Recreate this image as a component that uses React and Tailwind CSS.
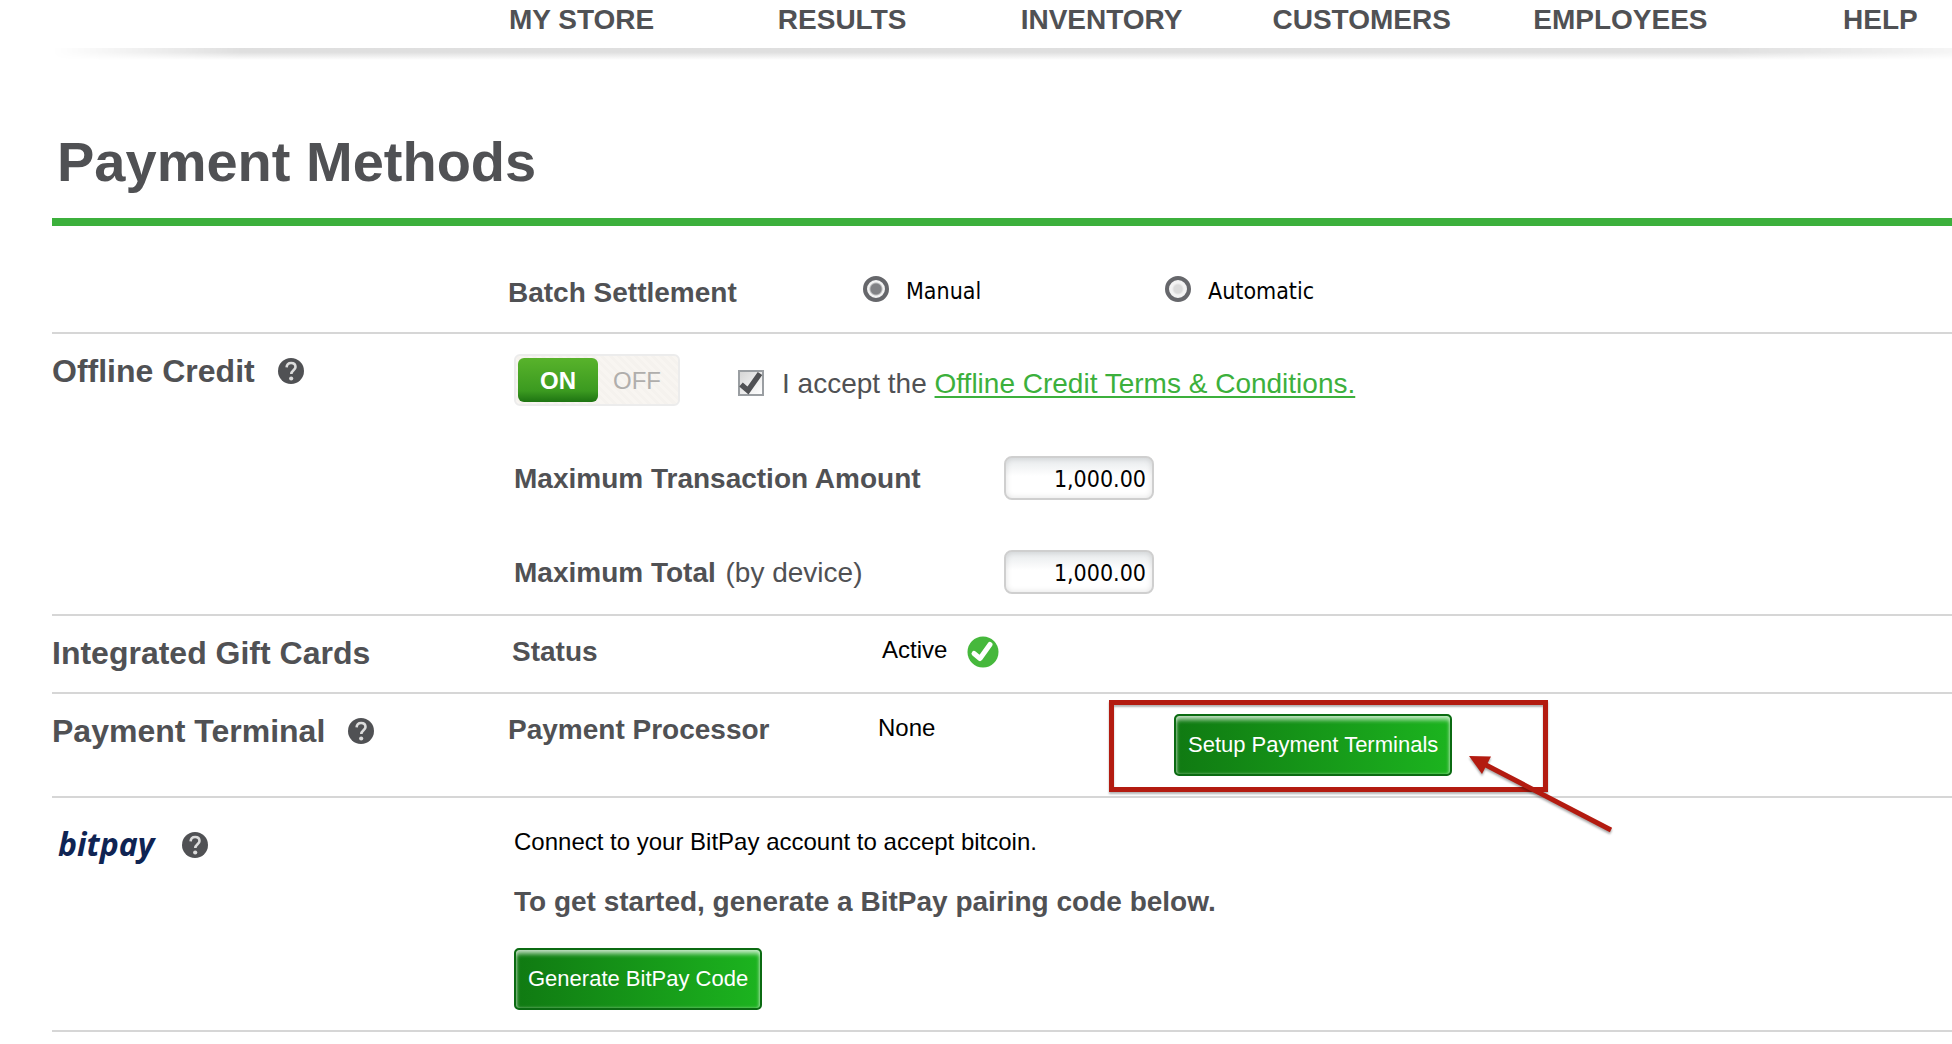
import { useState } from 'react';

const navItems = ['MY STORE', 'RESULTS', 'INVENTORY', 'CUSTOMERS', 'EMPLOYEES', 'HELP'];

function HelpButton({ label, className = '' }) {
    return (
        <button type="button" aria-label={label} className={`block w-[26px] h-[26px] shrink-0 ${className}`}>
            <svg viewBox="0 0 26 26" className="w-full h-full" aria-hidden="true">
                <circle cx="13" cy="13" r="13" fill="#505154" />
                <path d="M8.600 9.400C8.800 6.600 10.600 5 13.100 5c2.600 0 4.400 1.500 4.400 3.900 0 3.400-4.200 3.400-4.200 7.200" fill="none" stroke="#dcdcdc" strokeWidth="2.600" />
                <circle cx="13.200" cy="20.500" r="2.100" fill="#dcdcdc" />
            </svg>
        </button>
    );
}

function GreenButton({ children, className = '' }) {
    return (
        <button
            type="button"
            className={`block h-[62px] px-3 whitespace-nowrap rounded-[5px] border-2 border-[#0b6b12] bg-linear-to-r from-[#107a12] to-[#1cb41f] shadow-[inset_0_4px_4px_rgba(255,255,255,0.65),inset_0_0_3px_rgba(255,255,255,0.5)] text-[22px] leading-7 text-white ${className}`}
        >
            {children}
        </button>
    );
}

function Radio({ label, checked, onChange, className = '' }) {
    return (
        <label className={`flex items-start ${className}`}>
            <input
                type="radio"
                name="batch"
                checked={checked}
                onChange={onChange}
                className="appearance-none w-[26px] h-[26px] mt-px mr-4 rounded-full border-4 border-[#66676b] bg-[radial-gradient(circle,#dadada_0_4px,#f3f3f3_6px)] checked:bg-[radial-gradient(circle,#818285_0_5px,#f3f3f3_7px)]"
            />
            <span className="pl-px font-['DejaVu_Sans_Condensed','Noto_Sans',sans-serif] text-[23px] leading-8 text-black">{label}</span>
        </label>
    );
}

function AmountRow({ id, children, className = '' }) {
    return (
        <div className={`flex items-center h-11 ${className}`}>
            <label htmlFor={id} className="w-[490px] pt-px text-[28px] leading-8 font-bold">
                {children}
            </label>
            <input
                id={id}
                type="text"
                defaultValue="1,000.00"
                className="w-[150px] h-11 pt-[2px] px-[6px] text-right font-['DejaVu_Sans_Condensed','Noto_Sans',sans-serif] text-[23px] text-black rounded-lg border-2 border-[#cfcfcf] bg-linear-to-b from-[#e6e9eb] via-white via-45% to-white shadow-[inset_0_0_6px_rgba(0,0,0,0.12)]"
            />
        </div>
    );
}

function Section({ title, help, className = '', children }) {
    return (
        <section className="flex border-b-2 border-[#d6d6d6]">
            <div className={`w-[456px] shrink-0 flex items-start ${className}`}>
                <h2 className="text-[32px] leading-9 font-bold">{title}</h2>
                {help && <HelpButton label={help} className="mt-[5px] ml-[23px]" />}
            </div>
            {children}
        </section>
    );
}

// Red highlight around the setup button, with the arrow pointing at it
function Callout({ children }) {
    return (
        <div className="relative w-[439px] h-[92px] mt-[6px] border-5 border-[#b31b10] shadow-[0_2px_2px_rgba(0,0,0,0.3),inset_0_2px_2px_rgba(0,0,0,0.3)] pl-[60px] pt-[9px]">
            {children}
            <svg
                viewBox="0 0 150 84"
                className="absolute left-[350px] top-[48px] w-[150px] h-[84px] drop-shadow-[0_2px_1px_rgba(0,0,0,0.35)]"
                aria-hidden="true"
            >
                <path d="M20 11L147 77" stroke="#b31b10" strokeWidth="5" />
                <path d="M5 3L27 3.500L18 21Z" fill="#b31b10" />
            </svg>
        </div>
    );
}

export default function App() {
    const [batch, setBatch] = useState('manual');
    const [offline, setOffline] = useState(true);
    const [accepted, setAccepted] = useState(true);

    return (
        <div className="bg-white font-['Liberation_Sans',Arial,sans-serif] text-[#505154] overflow-x-hidden">
            <header>
                <nav className="h-12 pt-1 pl-[509px] grid grid-cols-[269fr_243fr_252fr_261fr_310fr_109fr]">
                    {navItems.map((item) => (
                        <a key={item} href="#" className="text-[28px] leading-8 font-bold whitespace-nowrap">
                            {item}
                        </a>
                    ))}
                </nav>
                <div className="h-3 ml-[52px] bg-linear-to-b from-[#dfdfdf] from-35% to-white mask-[linear-gradient(to_right,transparent,black_10%,black_88%,rgba(0,0,0,0.3))]" />
            </header>

            <main className="pl-[52px]">
                <h1 className="pl-[5px] pt-[70px] h-[158px] text-[56px] leading-16 font-bold">Payment Methods</h1>
                <div className="h-2 bg-[#3cb03c]" />

                <section className="flex h-[108px] pt-[49px] pl-[456px] border-b-2 border-[#d6d6d6]">
                    <h3 className="w-[355px] pt-[2px] text-[28px] leading-8 font-bold">Batch Settlement</h3>
                    <Radio
                        label="Manual"
                        className="w-[302px]"
                        checked={batch === 'manual'}
                        onChange={() => setBatch('manual')}
                    />
                    <Radio label="Automatic" checked={batch === 'automatic'} onChange={() => setBatch('automatic')} />
                </section>

                <Section title="Offline Credit" help="About offline credit" className="pt-[19px]">
                    <div className="pl-[6px] pt-5 pb-5">
                        <div className="flex items-start">
                            <button
                                type="button"
                                role="switch"
                                aria-checked={offline}
                                aria-label="Offline credit"
                                onClick={() => setOffline(!offline)}
                                className="flex w-[166px] h-[52px] p-[2px] rounded-md border-2 border-[#ececec] bg-[repeating-linear-gradient(45deg,#f8f5f1_0_3px,#f5f2ee_3px_6px)] text-[24px] leading-[46px]"
                            >
                                <span className="w-20 h-11 rounded-md bg-linear-to-b from-[#58b32b] via-[#3b9a20] via-75% to-[#1d7412] font-bold text-white">
                                    ON
                                </span>
                                <span className="flex-1 text-[#b0aeac]">OFF</span>
                            </button>
                            <div className="flex items-start pt-[14px] ml-[58px]">
                                <span className="relative block w-[26px] h-[26px] mt-[2px]">
                                    <input
                                        id="terms"
                                        type="checkbox"
                                        checked={accepted}
                                        onChange={() => setAccepted(!accepted)}
                                        className="appearance-none block w-[26px] h-[26px] border-2 border-[#9a9ea2] bg-linear-to-br from-[#d6d6d6] to-white"
                                    />
                                    {accepted && (
                                        <svg viewBox="0 0 26 26" className="absolute inset-0 pointer-events-none" aria-hidden="true">
                                            <path d="M3 14.500L10 20.500L22 3.500" fill="none" stroke="#505154" strokeWidth="5.500" />
                                        </svg>
                                    )}
                                </span>
                                <label htmlFor="terms" className="ml-[18px] text-[28px] leading-8 whitespace-pre">
                                    I accept the{' '}
                                </label>
                                <a href="#" className="text-[28px] leading-8 text-[#3cb03c] underline decoration-2 underline-offset-3">
                                    Offline Credit Terms &amp; Conditions.
                                </a>
                            </div>
                        </div>
                        <AmountRow id="max-transaction" className="mt-[50px]">
                            Maximum Transaction Amount
                        </AmountRow>
                        <AmountRow id="max-total" className="mt-[50px]">
                            Maximum Total <span className="pl-[2px] font-normal">(by device)</span>
                        </AmountRow>
                    </div>
                </Section>

                <Section title="Integrated Gift Cards" className="h-[76px] pt-[19px]">
                    <h3 className="w-[374px] pl-1 pt-5 text-[28px] leading-8 font-bold">Status</h3>
                    <p className="pt-5 text-[24px] leading-7 text-black">Active</p>
                    <svg viewBox="0 0 32 32" className="w-8 h-8 mt-5 ml-5" role="img" aria-label="Active">
                        <circle cx="16" cy="16" r="15.500" fill="#46b83c" />
                        <path d="M7 17.500L13 22.500L23 8.500" fill="none" stroke="#fff" strokeWidth="5" strokeLinecap="round" strokeLinejoin="round" />
                    </svg>
                </Section>

                <Section title="Payment Terminal" help="About payment terminals" className="h-[102px] pt-[19px]">
                    <h3 className="w-[370px] pt-5 text-[28px] leading-8 font-bold">Payment Processor</h3>
                    <p className="w-[231px] pt-5 text-[24px] leading-7 text-black">None</p>
                    <Callout>
                        <GreenButton>Setup Payment Terminals</GreenButton>
                    </Callout>
                </Section>

                <section className="flex border-b-2 border-[#d6d6d6]">
                    <div className="w-[456px] shrink-0 flex items-start pl-[6px] pt-7">
                        <span className="w-[98px] font-['Open_Sans','Noto_Sans',sans-serif] text-[32px] leading-9 font-bold italic text-[#0f2453]">
                            bitpay
                        </span>
                        <HelpButton label="About BitPay" className="mt-[6px] ml-[26px]" />
                    </div>
                    <div className="pl-[6px] pt-[30px] pb-5">
                        <p className="text-[24px] leading-7 text-black">Connect to your BitPay account to accept bitcoin.</p>
                        <p className="mt-[30px] text-[28px] leading-8 font-bold">
                            To get started, generate a BitPay pairing code below.
                        </p>
                        <GreenButton className="mt-[30px]">Generate BitPay Code</GreenButton>
                    </div>
                </section>
            </main>
        </div>
    );
}
